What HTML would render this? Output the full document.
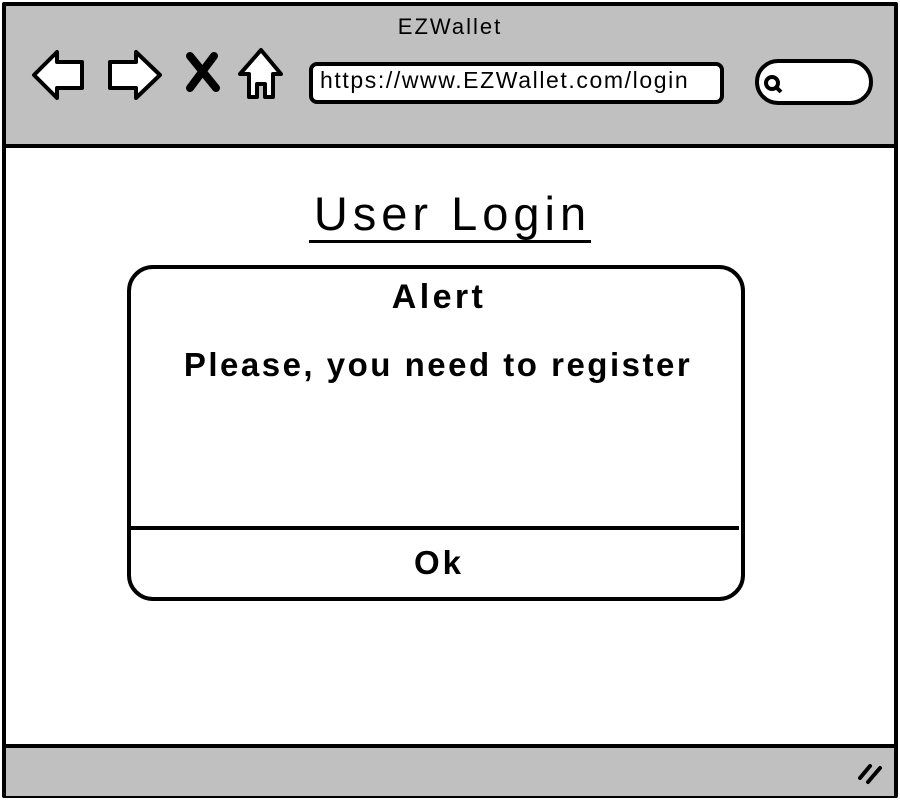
<!DOCTYPE html>
<html><head><style>
body{margin:0;width:900px;height:800px;background:#fff;font-family:"Liberation Sans",sans-serif;position:relative;overflow:hidden}
.abs{position:absolute}
</style></head><body>
<div class="abs" style="left:2px;top:2px;width:888px;height:788px;border:4px solid #000;border-radius:2px"></div>
<div class="abs" style="left:6px;top:6px;width:888px;height:138px;background:#c0c0c0;border-bottom:4px solid #000"></div>
<div class="abs" style="left:6px;top:744px;width:888px;height:48px;background:#c0c0c0;border-top:4px solid #000"></div>
<div class="abs" style="left:0;width:900px;top:14px;text-align:center;font-size:22px;letter-spacing:2px">EZWallet</div>
<svg class="abs" style="left:0;top:0" width="900" height="150">
<g stroke="#000" stroke-width="4" fill="#fff" stroke-linejoin="round">
<path d="M34 75 L57 52 L57 62 L82 62 L82 88 L57 88 L57 98 Z"/>
<path d="M160 75 L136 52 L136 62 L110 62 L110 88 L136 88 L136 98 Z"/>
<path d="M261 50 L240 74 L249 74 L249 97 L257 97 L257 84 L265 84 L265 97 L273 97 L273 74 L281 74 Z"/>
</g>
<path d="M190 56 L216 88 M214 56 L190 88" stroke="#000" stroke-width="8" stroke-linecap="round"/>
<rect x="311" y="64" width="411" height="38" rx="6" fill="#fff" stroke="#000" stroke-width="4"/>
<rect x="757" y="61" width="114" height="42" rx="21" fill="#fff" stroke="#000" stroke-width="4"/>
<circle cx="772" cy="83" r="6" fill="none" stroke="#000" stroke-width="4"/>
<path d="M776 87 L781 92" stroke="#000" stroke-width="4"/>
</svg>
<div class="abs" style="left:320px;top:67px;font-size:23px;letter-spacing:1.6px">https://www.EZWallet.com/login</div>
<div class="abs" style="left:0;width:900px;top:186px;text-align:center;font-size:47px"><span style="border-bottom:3px solid #000;line-height:52px;display:inline-block;letter-spacing:5px;padding-left:5px">User Login</span></div>
<div class="abs" style="left:127px;top:265px;width:610px;height:328px;border:4px solid #000;border-radius:26px"></div>
<div class="abs" style="left:129px;top:526px;width:610px;height:4px;background:#000"></div>
<div class="abs" style="left:127px;width:618px;top:278px;text-align:center;font-size:34px;font-weight:bold;letter-spacing:3.4px;padding-left:3px">Alert</div>
<div class="abs" style="left:127px;width:618px;top:346px;text-align:center;font-size:33px;font-weight:bold;letter-spacing:2.5px;padding-left:2px">Please, you need to register</div>
<div class="abs" style="left:127px;width:618px;top:544px;text-align:center;font-size:33px;font-weight:bold;letter-spacing:3px;padding-left:3px">Ok</div>
<svg class="abs" style="left:850px;top:758px" width="40" height="30"><path d="M10 20 L20 8 M18 24 L30 10" stroke="#000" stroke-width="4" stroke-linecap="round"/></svg>
</body></html>
